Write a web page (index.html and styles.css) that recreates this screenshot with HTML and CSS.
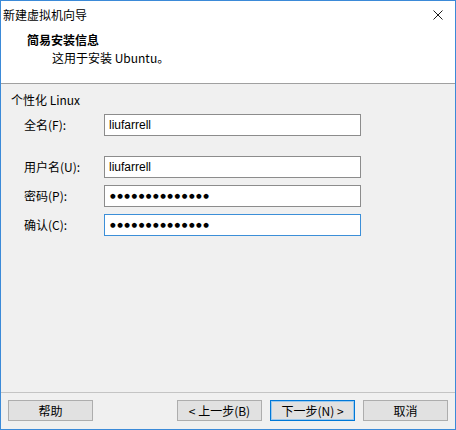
FILE: index.html
```html
<!DOCTYPE html>
<html lang="zh-CN">
<head>
<meta charset="utf-8">
<title>新建虚拟机向导</title>
<link rel="stylesheet" href="styles.css">
</head>
<body>
<div class="window">
  <div class="titlebar">
    <span class="title">新建虚拟机向导</span>
    <svg class="close" width="10" height="10" viewBox="0 0 10 10"><path d="M0.5 0.5 L9.5 9.5 M9.5 0.5 L0.5 9.5" stroke="#1a1a1a" stroke-width="1" fill="none"/></svg>
  </div>
  <div class="header">
    <div class="heading">简易安装信息</div>
    <div class="subheading">这用于安装 Ubuntu。</div>
  </div>
  <div class="content">
    <div class="group-title">个性化 Linux</div>
    <div class="form">
      <label class="label">全名(F):</label>
      <div class="field">liufarrell</div>
      <label class="label row-gap">用户名(U):</label>
      <div class="field row-gap">liufarrell</div>
      <label class="label">密码(P):</label>
      <div class="field dots">●●●●●●●●●●●●●●</div>
      <label class="label">确认(C):</label>
      <div class="field dots focused">●●●●●●●●●●●●●●</div>
    </div>
  </div>
  <div class="footer">
    <button class="btn">帮助</button>
    <div class="spacer"></div>
    <button class="btn">&lt; 上一步(B)</button>
    <button class="btn default">下一步(N) &gt;</button>
    <button class="btn">取消</button>
  </div>
</div>
</body>
</html>
```
FILE: styles.css
```css
* { box-sizing: border-box; }
html, body { margin: 0; padding: 0; }
body {
  font-family: "Noto Sans CJK SC", "Noto Sans", sans-serif;
  font-size: 12px;
  color: #000;
  background: #fff;
}
.window {
  width: 456px;
  height: 430px;
  border: 1px solid #3b8ad8;
  display: flex;
  flex-direction: column;
  background: #f0f0f0;
}
.titlebar {
  height: 27px;
  flex: none;
  background: #fff;
  display: flex;
  align-items: center;
  padding-left: 2px;
  padding-right: 12px;
}
.title { flex: 1; line-height: 16px; }
.close { display: block; margin-top: 1px; }
.header {
  height: 56px;
  flex: none;
  background: #fff;
  border-bottom: 1px solid #a0a0a0;
  padding: 4px 0 0 26px;
}
.heading { font-weight: bold; line-height: 16px; }
.subheading { line-height: 16px; margin-top: 2px; padding-left: 25px; }
.content {
  flex: 1;
  padding: 8px 0 0 10px;
}
.group-title { line-height: 16px; }
.form {
  margin-top: 6px;
  margin-left: 13px;
  display: grid;
  grid-template-columns: 80px 257px;
  row-gap: 7px;
  align-items: center;
}
.label { line-height: 16px; }
.row-gap { margin-top: 13px; }
.field {
  height: 22px;
  border: 1px solid #8c8c8c;
  background: #fff;
  padding-left: 4px;
  line-height: 20px;
  font-family: "Liberation Sans", Arial, sans-serif;
  font-size: 12px;
}
.dots {
  font-family: "DejaVu Sans", sans-serif;
  font-size: 6.5px;
  letter-spacing: 1.5px;
  padding-left: 5px;
}
.focused { border-color: #3c8fd8; }
.footer {
  height: 37px;
  flex: none;
  border-top: 1px solid #c4c4c4;
  display: flex;
  align-items: flex-start;
  padding: 7px 7px 0 7px;
  gap: 8px;
}
.spacer { flex: 1; }
.btn {
  width: 85px;
  height: 21px;
  margin: 0;
  padding: 0;
  border: 1px solid #adadad;
  background: #e1e1e1;
  font-family: "Noto Sans CJK SC", "Noto Sans", sans-serif;
  font-size: 12px;
  line-height: 19px;
  color: #000;
}
.btn.default {
  border-color: #0078d7;
  box-shadow: inset 0 0 0 1px #9cc8ec;
}
```
